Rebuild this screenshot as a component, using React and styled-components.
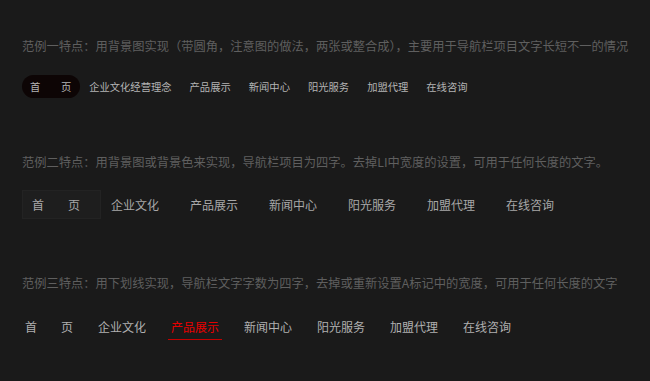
import React from 'react';
import styled, { createGlobalStyle } from 'styled-components';

// Page-wide reset: dark background, CJK font
const GlobalStyle = createGlobalStyle`
  html, body {
    margin: 0;
    padding: 0;
    background: #1a1a1a;
  }
  body {
    font-family: "Noto Sans CJK SC", "Microsoft YaHei", sans-serif;
  }
  ul { list-style: none; margin: 0; padding: 0; }
`;

const Page = styled.div`
  width: 650px;
  height: 381px;
  box-sizing: border-box;
  padding: 36px 0 0 22px;
  background: #1a1a1a;
  overflow: hidden;
`;

// Grey line describing each example
const Note = styled.p`
  margin: ${p => p.$top || 0}px 0 0;
  font-size: 12.25px;
  line-height: 20px;
  color: #5f5f5f;
  white-space: nowrap;
`;

// Example 1: rounded pill behind the current item
const PillNav = styled.ul`
  display: flex;
  gap: 1px;
  margin-top: 19px;
`;

const PillItem = styled.li`
  padding: 0 9px 0 8px;
  height: 23px;
  line-height: 23px;
  font-size: 10.3px;
  color: #b4b4b4;
  border-radius: 12px;
  background: ${p => (p.$active ? '#0d0505' : 'transparent')};
  white-space: nowrap;
`;

// Example 2: block background on the current item
const BlockNav = styled.ul`
  display: flex;
  margin-top: 18px;
`;

const BlockItem = styled.li`
  box-sizing: border-box;
  height: 29px;
  line-height: 27px;
  padding: 0 20px 0 9px;
  font-size: 12px;
  color: #a8a8a8;
  border: 1px solid ${p => (p.$active ? '#232323' : 'transparent')};
  background: ${p => (p.$active ? '#1e1e1e' : 'transparent')};
  white-space: nowrap;
`;

// Example 3: red underline on the current item
const LineNav = styled.ul`
  display: flex;
  gap: 19px;
  margin-top: 22px;
`;

const LineItem = styled.li`
  padding: 0 3px;
  height: 24px;
  line-height: 24px;
  font-size: 12px;
  color: ${p => (p.$active ? '#e60000' : '#b0b0b0')};
  border-bottom: 1px solid ${p => (p.$active ? '#c40000' : 'transparent')};
  white-space: nowrap;
`;

const items = ['企业文化', '产品展示', '新闻中心', '阳光服务', '加盟代理', '在线咨询'];
const home = '首\u3000\u3000页';

function App() {
  return (
    <Page>
      <GlobalStyle />
      <Note>范例一特点：用背景图实现（带圆角，注意图的做法，两张或整合成），主要用于导航栏项目文字长短不一的情况</Note>
      <PillNav>
        <PillItem $active>{home}</PillItem>
        <PillItem>企业文化经营理念</PillItem>
        {items.slice(1).map(t => (
          <PillItem key={t}>{t}</PillItem>
        ))}
      </PillNav>

      <Note $top={54}>范例二特点：用背景图或背景色来实现，导航栏项目为四字。去掉LI中宽度的设置，可用于任何长度的文字。</Note>
      <BlockNav>
        <BlockItem $active>{home}</BlockItem>
        {items.map(t => (
          <BlockItem key={t}>{t}</BlockItem>
        ))}
      </BlockNav>

      <Note $top={54}>范例三特点：用下划线实现，导航栏文字字数为四字，去掉或重新设置A标记中的宽度，可用于任何长度的文字</Note>
      <LineNav>
        <LineItem>{home}</LineItem>
        {items.map(t => (
          <LineItem key={t} $active={t === '产品展示'}>{t}</LineItem>
        ))}
      </LineNav>
    </Page>
  );
}

export default App;
